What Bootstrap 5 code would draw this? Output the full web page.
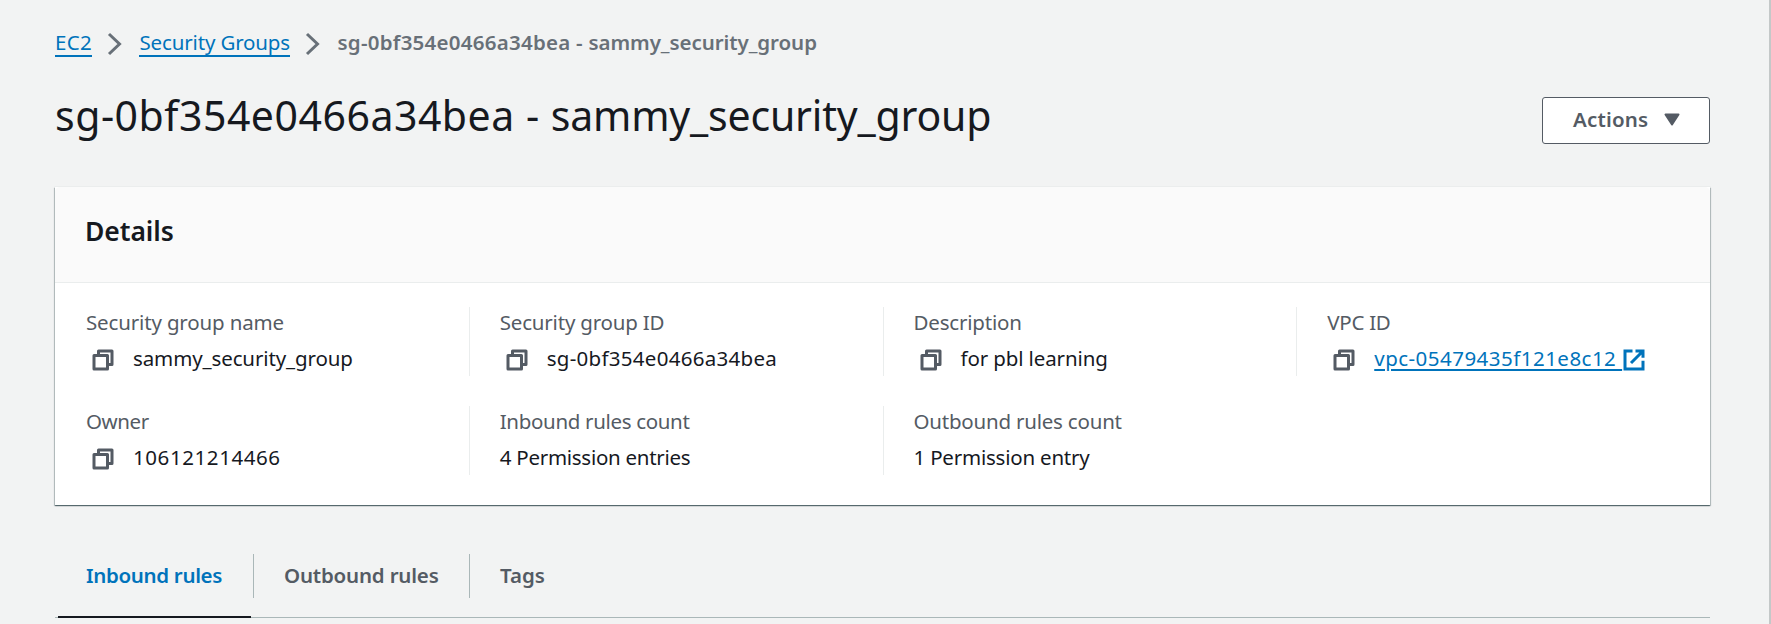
<!DOCTYPE html>
<html lang="en">
<head>
<meta charset="utf-8">
<meta name="viewport" content="width=device-width, initial-scale=1">
<title>Security group details</title>
<link rel="stylesheet" href="https://cdn.jsdelivr.net/npm/bootstrap@5.3.0/dist/css/bootstrap.min.css">
<style>
  html, body { height: 100%; overflow: hidden; }
  body { font-family: "Noto Sans", sans-serif; font-size: 20.5px; line-height: 30px; color: #16191f; background: #f2f3f3; }
  a { color: #0073bb; }
  .page { height: 624px; padding: 27px 59px 0 55px; border-right: 2px solid #c4c8c8; }
  .crumbs { --bs-breadcrumb-divider: none; height: 30px; margin-bottom: 0; flex-wrap: nowrap; }
  .crumbs li { white-space: pre; display: flex; }
  .crumbs a { text-decoration: none; border-bottom: 2px solid #0073bb; height: 30px; }
  .crumbs svg { margin: 5px 16px 0 15.5px; flex: none; }
  .crumbs .here { color: #687078; font-weight: 600; letter-spacing: -.06px; }
  .crumbs .gid { letter-spacing: .25px; }
  .heading { margin-top: 28px; height: 60px; }
  .heading h1 { font-size: 41px; line-height: 60px; font-weight: 400; letter-spacing: -.2px; margin: 0; }
  .heading .gid { letter-spacing: .52px; }
  .btn-actions { --bs-btn-color: #545b64; --bs-btn-bg: #fff; --bs-btn-border-color: #545b64; --bs-btn-border-radius: 3px; --bs-btn-font-size: 20.5px; --bs-btn-font-weight: 600; width: 168px; height: 47px; padding: 0 29px 3px 30px; line-height: 30px; letter-spacing: .2px; margin-top: 12px; }
  .btn-actions svg { margin-top: 2px; }
  .panel { --bs-card-border-width: 0; --bs-card-border-radius: 0; height: 318px; margin-top: 42px; box-shadow: 0 1px 1px 0 rgba(0,28,36,.45), 1px 1px 1px 0 rgba(0,28,36,.18), -1px 1px 1px 0 rgba(0,28,36,.18), 0 0 0 .5px #e3e7e7; }
  .panel .card-header { height: 96px; background: #fafafa; border-bottom: 1px solid #eaeded; padding: 27px 30px 0; }
  .panel h2 { font-size: 26.5px; line-height: 34px; font-weight: 600; letter-spacing: -.08px; margin: 0; }
  .facts { padding-top: 24px; row-gap: 30px; }
  .fact { height: 69px; padding-left: 30px; border-left: 1px solid transparent; }
  .fact + .fact:not(.first) { border-left-color: #eaeded; }
  .fact dt { font-weight: 400; color: #545b64; height: 36px; }
  .fact dd { margin: 0; height: 30px; display: flex; white-space: nowrap; }
  .copy { margin: 5px 18px 0 5px; flex: none; }
  .vpc { text-decoration-thickness: 2px; text-underline-offset: 3px; white-space: pre; }
  .tabs { height: 83px; margin-top: 30px; border-bottom: 1px solid #aab7b8; }
  .tabs .nav-link { position: relative; font-weight: 600; color: #545b64; padding: 25px 0 0 30px; height: 83px; }
  .tabs .nav-link.active { color: #0073bb; padding-left: 31px; }
  .tabs .nav-link.active::after { content: ""; position: absolute; left: 3px; right: 2px; bottom: 0; height: 2px; background: #16191f; }
  .rule { width: 1px; height: 44px; margin-top: 19px; background: #aab7b8; }
  .w-in { width: 198px; } .w-out { width: 215px; }
  .t53 { letter-spacing: .58px } .t47 { letter-spacing: .475px } .t26 { letter-spacing: .28px } .t30 { letter-spacing: .3px }
  .n12 { letter-spacing: -.12px } .n15 { letter-spacing: -.15px } .n19 { letter-spacing: -.19px } .n24 { letter-spacing: -.21px }
  .n30 { letter-spacing: -.27px } .n39 { letter-spacing: -.33px } .n53 { letter-spacing: -.4px }
</style>
</head>
<body>
<svg class="d-none">
  <symbol id="copy" viewBox="0 0 16 16"><path d="M2 5h9v9H2zM5 5V2h9v9h-3" fill="none" stroke="#545b64" stroke-width="2" stroke-linejoin="round"/></symbol>
  <symbol id="chev" viewBox="0 0 16 24"><path d="M2 2l10.500 10L2 22" fill="none" stroke="#687078" stroke-width="3"/></symbol>
</svg>
<main class="page">
  <nav aria-label="breadcrumb">
    <ol class="breadcrumb crumbs">
      <li><a href="#" class="t30">EC2</a><svg width="16" height="24"><use href="#chev"/></svg></li>
      <li><a href="#" class="n15">Security Groups</a><svg width="16" height="24"><use href="#chev"/></svg></li>
      <li class="here" aria-current="page"><span class="gid">sg-0bf354e0466a34bea - </span>sammy_security_group</li>
    </ol>
  </nav>
  <header class="heading d-flex justify-content-between">
    <h1><span class="gid">sg-0bf354e0466a34bea - </span>sammy_security_group</h1>
    <button class="btn btn-actions d-flex align-items-center justify-content-between">Actions
      <svg width="16" height="14" viewBox="0 0 16 14"><path d="M1.500 1.500h13L8 11.500z" fill="#545b64" stroke="#545b64" stroke-width="2" stroke-linejoin="round"/></svg>
    </button>
  </header>
  <section class="card panel">
    <div class="card-header"><h2>Details</h2></div>
    <dl class="row g-0 facts mb-0">
      <div class="col-3 fact"><dt class="n15">Security group name</dt><dd class="n12"><svg class="copy" width="24" height="24"><use href="#copy"/></svg>sammy_security_group</dd></div>
      <div class="col-3 fact"><dt class="n19">Security group ID</dt><dd class="t26"><svg class="copy" width="24" height="24"><use href="#copy"/></svg>sg-0bf354e0466a34bea</dd></div>
      <div class="col-3 fact"><dt class="n19">Description</dt><dd class="n12"><svg class="copy" width="24" height="24"><use href="#copy"/></svg>for pbl learning</dd></div>
      <div class="col-3 fact"><dt class="n30">VPC ID</dt><dd class="t47"><svg class="copy" width="24" height="24"><use href="#copy"/></svg><a href="#" class="vpc">vpc-05479435f121e8c12 </a><svg width="24" height="24" viewBox="0 0 16 16" style="margin-top:5px"><path d="M7 2H2v12h12V8.500M9 2h5v4.500M14 2L6 10" fill="none" stroke="#0073bb" stroke-width="2"/></svg></dd></div>
      <div class="col-3 fact first"><dt class="n53">Owner</dt><dd class="t53"><svg class="copy" width="24" height="24"><use href="#copy"/></svg>106121214466</dd></div>
      <div class="col-3 fact"><dt class="n39">Inbound rules count</dt><dd class="n30">4 Permission entries</dd></div>
      <div class="col-3 fact"><dt class="n24">Outbound rules count</dt><dd class="n24">1 Permission entry</dd></div>
    </dl>
  </section>
  <nav class="nav tabs flex-nowrap">
    <a href="#" class="nav-link active w-in n39">Inbound rules</a>
    <span class="rule"></span>
    <a href="#" class="nav-link w-out n19">Outbound rules</a>
    <span class="rule"></span>
    <a href="#" class="nav-link">Tags</a>
  </nav>
</main>
<script src="https://cdn.jsdelivr.net/npm/bootstrap@5.3.0/dist/js/bootstrap.bundle.min.js"></script>
</body>
</html>
